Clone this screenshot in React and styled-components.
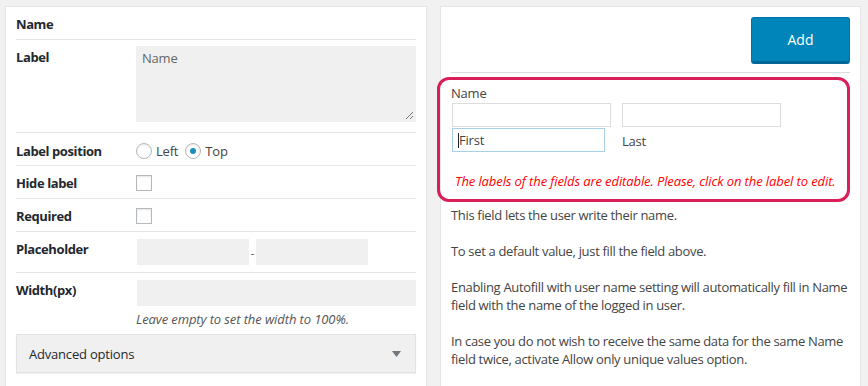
import styled, { createGlobalStyle } from 'styled-components'

const GlobalStyle = createGlobalStyle`
	html, body {
		margin: 0;
		padding: 0;
		background: #f1f1f1;
		font-family: 'Open Sans', 'Noto Sans', sans-serif;
		font-size: 13px;
		color: #23282d;
	}
	* {
		box-sizing: border-box;
	}
`

const Page = styled.div`
	display: grid;
	grid-template-columns: 422px 421px;
	gap: 13px;
	padding: 6px 0 0 5px;
	height: 392px;
	overflow: hidden;
`

const Panel = styled.div`
	background: #fff;
	border: 1px solid #e5e5e5;
	box-shadow: 0 1px 1px rgba(0, 0, 0, 0.04);
	padding: 0 10px;
	height: 100%;
`

const Heading = styled.div`
	font-weight: 700;
	font-size: 13px;
	letter-spacing: -0.4px;
	line-height: 18px;
	padding: 8px 0 6px;
	border-bottom: 1px solid #e5e5e5;
`

const Row = styled.div`
	display: grid;
	grid-template-columns: 120px 1fr;
	align-items: start;
	padding: ${props => props.pad || '9px 0 7px'};
	border-bottom: ${props => (props.last ? 'none' : '1px solid #e5e5e5')};
`

const RowLabel = styled.div`
	font-weight: 700;
	letter-spacing: -0.4px;
	line-height: ${props => props.lh || '18px'};
	margin-top: ${props => props.offset || '0'};
`

const TextArea = styled.div`
	height: 76px;
	background: #f0f0f0;
	padding: 3px 6px;
	line-height: 18px;
	letter-spacing: -0.2px;
	color: #666;
	position: relative;
`

const Grip = styled.svg`
	position: absolute;
	right: 2px;
	bottom: 2px;
`

const Radios = styled.div`
	display: flex;
	align-items: center;
	line-height: 18px;
	letter-spacing: -0.2px;
	color: #444;
`

const Radio = styled.span`
	width: 16px;
	height: 16px;
	border-radius: 50%;
	border: 1px solid #b4b9be;
	box-shadow: inset 0 1px 2px rgba(0, 0, 0, 0.1);
	background: #fff;
	display: inline-flex;
	align-items: center;
	justify-content: center;
	margin-right: 4px;
	margin-left: ${props => props.gap || '0'};
	&::after {
		content: '';
		width: 6px;
		height: 6px;
		border-radius: 50%;
		background: ${props => (props.checked ? '#1e8cbe' : 'transparent')};
	}
`

const Checkbox = styled.span`
	display: block;
	width: 16px;
	height: 16px;
	border: 1px solid #b4b9be;
	background: #fff;
	box-shadow: inset 0 1px 2px rgba(0, 0, 0, 0.1);
`

const Pair = styled.div`
	display: flex;
	align-items: center;
	margin-left: 1px;
`

const GreyInput = styled.div`
	height: 26px;
	width: ${props => props.w || '100%'};
	background: #f0f0f0;
`

const Dash = styled.span`
	width: 7px;
	text-align: center;
	color: #444;
	font-size: 11px;
`

const Hint = styled.div`
	grid-column: 2;
	margin-top: 4px;
	font-style: italic;
	letter-spacing: -0.1px;
	color: #555;
	line-height: 18px;
`

const Advanced = styled.div`
	display: flex;
	justify-content: space-between;
	align-items: center;
	height: 39px;
	margin-top: 6px;
	padding: 0 14px 0 12px;
	background: #f0f0f0;
	border: 1px solid #e2e2e2;
	box-shadow: 0 1px 1px rgba(0, 0, 0, 0.06);
	font-size: 13px;
	letter-spacing: -0.2px;
	color: #23282d;
`

const Toolbar = styled.div`
	display: flex;
	justify-content: flex-end;
	padding: 10px 0 8px;
	border-bottom: 1px solid #dcdcdc;
`

const AddButton = styled.button`
	width: 99px;
	height: 47px;
	background: #0085ba;
	border: 1px solid #0073aa;
	border-bottom: 3px solid #006799;
	border-radius: 3px;
	color: #fff;
	font-family: inherit;
	font-size: 14px;
	padding: 0;
`

const Highlight = styled.div`
	margin: 4px 0 0 -14px;
	border: 3px solid #d81f58;
	border-radius: 12px;
	padding: 4px 10px 9px 11px;
`

const FieldTitle = styled.div`
	line-height: 18px;
	letter-spacing: -0.2px;
	color: #444;
`

const Inputs = styled.div`
	display: flex;
	gap: 11px;
	margin-top: 1px;
	padding-left: 1px;
`

const Box = styled.div`
	width: ${props => props.w};
	height: ${props => props.h || '24px'};
	border: 1px solid ${props => (props.focus ? '#a8d0e8' : '#dddddd')};
	background: #fff;
	display: flex;
	align-items: center;
	padding-left: 5px;
	color: #444;
	line-height: 18px;
	letter-spacing: -0.2px;
`

const Caret = styled.span`
	display: inline-block;
	width: 1px;
	height: 15px;
	background: #222;
`

const SubLabel = styled.div`
	width: 159px;
	display: flex;
	align-items: center;
	margin-left: 6px;
	padding-top: 2px;
	letter-spacing: -0.2px;
	color: #444;
`

const Notice = styled.div`
	margin: 20px 0 0 4px;
	color: #ff0000;
	font-style: italic;
	letter-spacing: -0.1px;
	line-height: 18px;
	white-space: nowrap;
`

const Desc = styled.div`
	margin-top: 4px;
	color: #444;
	line-height: 18px;
	letter-spacing: -0.33px;
	p {
		margin: 0 0 18px;
	}
`

export default function App() {
	return (
		<>
			<GlobalStyle />
			<Page>
				<Panel>
					<Heading>Name</Heading>
					<Row pad="6px 0 10px">
						<RowLabel offset="2px">Label</RowLabel>
						<TextArea>
							Name
							<Grip width="9" height="9" viewBox="0 0 9 9">
								<path d="M8 1 L1 8 M8 5 L5 8" stroke="#777" strokeWidth="1" />
							</Grip>
						</TextArea>
					</Row>
					<Row pad="9px 0 5px">
						<RowLabel>Label position</RowLabel>
						<Radios>
							<Radio />
							Left
							<Radio checked gap="7px" />
							Top
						</Radios>
					</Row>
					<Row>
						<RowLabel lh="16px">Hide label</RowLabel>
						<Checkbox />
					</Row>
					<Row>
						<RowLabel lh="16px">Required</RowLabel>
						<Checkbox />
					</Row>
					<Row pad="7px 0 7px">
						<RowLabel offset="1px">Placeholder</RowLabel>
						<Pair>
							<GreyInput w="112px" />
							<Dash>-</Dash>
							<GreyInput w="112px" />
						</Pair>
					</Row>
					<Row pad="7px 0 0" last>
						<RowLabel offset="1px">Width(px)</RowLabel>
						<Pair>
							<GreyInput />
						</Pair>
						<Hint>Leave empty to set the width to 100%.</Hint>
					</Row>
					<Advanced>
						<span>Advanced options</span>
						<svg width="9" height="6" viewBox="0 0 9 6">
							<path d="M0 0 H9 L4.5 6 Z" fill="#72777c" />
						</svg>
					</Advanced>
				</Panel>

				<Panel>
					<Toolbar>
						<AddButton>Add</AddButton>
					</Toolbar>
					<Highlight>
						<FieldTitle>Name</FieldTitle>
						<Inputs>
							<Box w="159px" />
							<Box w="159px" />
						</Inputs>
						<Inputs>
							<Box w="153px" focus>
								<Caret />
								First
							</Box>
							<SubLabel>Last</SubLabel>
						</Inputs>
						<Notice>The labels of the fields are editable. Please, click on the label to edit.</Notice>
					</Highlight>
					<Desc>
						<p>This field lets the user write their name.</p>
						<p>To set a default value, just fill the field above.</p>
						<p>
							Enabling Autofill with user name setting will automatically fill in Name
							field with the name of the logged in user.
						</p>
						<p>
							In case you do not wish to receive the same data for the same Name
							field twice, activate Allow only unique values option.
						</p>
					</Desc>
				</Panel>
			</Page>
		</>
	)
}
